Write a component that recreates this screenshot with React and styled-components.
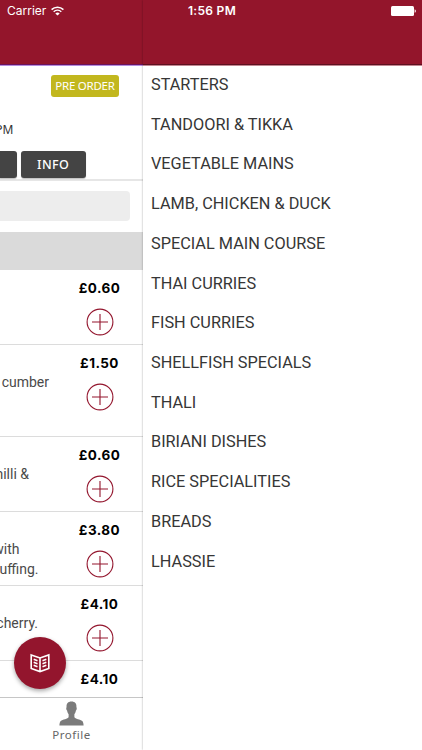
import React from 'react'
import styled, { createGlobalStyle } from 'styled-components'

const categories = [
  'STARTERS',
  'TANDOORI & TIKKA',
  'VEGETABLE MAINS',
  'LAMB, CHICKEN & DUCK',
  'SPECIAL MAIN COURSE',
  'THAI CURRIES',
  'FISH CURRIES',
  'SHELLFISH SPECIALS',
  'THALI',
  'BIRIANI DISHES',
  'RICE SPECIALITIES',
  'BREADS',
  'LHASSIE',
]

const dishes = [
  { price: '£0.60', height: 74.5, lines: [] },
  { price: '£1.50', height: 92.5, lines: ['cumber'], end: 49 },
  { price: '£0.60', height: 74.5, lines: ['hilli &'], end: 29 },
  { price: '£3.80', height: 74.5, lines: ['with', 'uffing.'], end: 38.5 },
  { price: '£4.10', height: 74.5, lines: ['cherry.'], end: 38 },
  { price: '£4.10', height: 38, lines: [] },
]

const AddIcon = () => (
  <svg width="28" height="28" viewBox="0 0 28 28" fill="none" stroke="#93152d" strokeWidth="1.1">
    <circle cx="14" cy="14" r="12.9" />
    <path d="M6 14H22M14 6V22" />
  </svg>
)

const WifiIcon = () => (
  <svg width="13" height="10" viewBox="0 0 13 10" fill="none" stroke="#fff" strokeWidth="1.5">
    <path d="M0.6 3.6C3.9 0.3 9.1 0.3 12.4 3.6" />
    <path d="M2.7 5.8C4.9 3.8 8.1 3.8 10.3 5.8" />
    <path d="M4.3 7.4C5.6 6.3 7.4 6.3 8.7 7.4L6.5 9.6Z" fill="#fff" stroke="none" />
  </svg>
)

const BatteryIcon = () => (
  <svg width="26" height="10" viewBox="0 0 26 10" fill="#fff">
    <rect width="23" height="10" rx="1.5" />
    <path d="M23.6 3.2C25.3 3.7 25.3 6.3 23.6 6.8Z" />
  </svg>
)

const MenuBookIcon = () => (
  <svg width="20" height="20" viewBox="0 0 20 20" fill="none" stroke="#fff" strokeWidth="1.6">
    <path d="M1.2 1.9L10 5L18.8 1.9V15.4L10 18.6L1.2 15.4ZM10 5V18.6" />
    <path d="M3.7 6.3L7.5 7.7M3.7 9.3L7.5 10.7M3.7 12.3L7.5 13.7M16.3 6.3L12.5 7.7M16.3 9.3L12.5 10.7M16.3 12.3L12.5 13.7" />
  </svg>
)

const ProfileIcon = () => (
  <svg width="25" height="25" viewBox="0 0 26 25" preserveAspectRatio="none" fill="#7b7b7b">
    <path d="M13 0.5C9.4 0.5 7.5 2.6 7.9 6.2C7.2 6.5 7.5 9 8.4 9.6C8.7 11.4 9.3 12.4 10 13.2V16C9.4 18 3.6 18.5 1.8 20C0.8 20.9 0.5 22.8 0.4 24.5H25.6C25.5 22.8 25.2 20.9 24.2 20C22.4 18.5 16.6 18 16 16V13.2C16.7 12.4 17.3 11.4 17.6 9.6C18.5 9 18.8 6.5 18.1 6.2C18.5 2.6 16.6 0.5 13 0.5Z" />
  </svg>
)

const App = () => {
  return (
    <Screen>
      <GlobalStyle />
      <Page>
        <PageHeader />
        <Restaurant>
          <Badge>PRE ORDER</Badge>
          <Hours>PM</Hours>
          <Actions>
            <Action $cut />
            <Action>INFO</Action>
          </Actions>
        </Restaurant>
        <SearchBar>
          <SearchField />
        </SearchBar>
        <SectionTitle />
        <DishList>
          {dishes.map((dish, i) => (
            <Dish key={i} $height={dish.height}>
              <Description $end={dish.end}>
                {dish.lines.map((line) => (
                  <Line key={line} $short={line === 'with'}>{line}</Line>
                ))}
              </Description>
              <Order>
                <Price>{dish.price}</Price>
                <AddIcon />
              </Order>
            </Dish>
          ))}
        </DishList>
        <TabBar>
          <ProfileIcon />
          <TabLabel>Profile</TabLabel>
        </TabBar>
      </Page>
      <Drawer>
        <DrawerHeader />
        <Categories>
          {categories.map((name) => (
            <Category key={name}>{name}</Category>
          ))}
        </Categories>
      </Drawer>
      <StatusBar>
        <Carrier>
          Carrier
          <WifiIcon />
        </Carrier>
        <Clock>1:56 PM</Clock>
        <BatteryIcon />
      </StatusBar>
      <MenuButton>
        <MenuBookIcon />
      </MenuButton>
    </Screen>
  )
}

export default App

const GlobalStyle = createGlobalStyle`
  * {
    box-sizing: border-box;
  }

  body {
    margin: 0;
    background: #fff;
    font-family: Roboto, sans-serif;
  }
`

const Screen = styled.div`
  position: relative;
  display: flex;
  width: 422px;
  height: 750px;
  overflow: hidden;
`

const Page = styled.div`
  display: flex;
  flex-direction: column;
  width: 143px;
  height: 750px;
  overflow: hidden;
`

const PageHeader = styled.div`
  flex: none;
  height: 66px;
  background: #93152b;
  border-bottom: 1px solid #b58bdc;
  box-shadow: inset 0 -1px 0 #6b1460;
`

const Restaurant = styled.div`
  flex: none;
  display: flex;
  flex-direction: column;
  height: 115px;
  padding-top: 9px;
  border-bottom: 2px solid #e6e6e6;
`

const Badge = styled.div`
  align-self: flex-end;
  width: 68px;
  height: 22px;
  margin-right: 24px;
  border-radius: 3px;
  background: #c2b71e;
  color: #fff;
  font: 11.5px/22px 'Noto Sans', sans-serif;
  letter-spacing: -0.25px;
  text-align: center;
  white-space: nowrap;
`

const Hours = styled.div`
  display: flex;
  justify-content: flex-end;
  width: 13.5px;
  margin-top: 24px;
  color: #333;
  font: 12px/18px 'Noto Sans', sans-serif;
`

const Actions = styled.div`
  display: flex;
  gap: 4px;
  margin-top: 12px;
`

const Action = styled.div`
  width: ${(props) => (props.$cut ? '16.7px' : '65px')};
  height: 27px;
  border-radius: ${(props) => (props.$cut ? '0 3px 3px 0' : '3px')};
  background: #444;
  box-shadow: 0 1px 1px rgba(0, 0, 0, 0.25);
  color: #fff;
  font: 500 12.5px/28px 'Noto Sans', sans-serif;
  letter-spacing: 0.4px;
  text-align: center;
`

const SearchBar = styled.div`
  flex: none;
  height: 51px;
  padding: 10px 13px 11px 0;
`

const SearchField = styled.div`
  height: 30px;
  border-radius: 0 4px 4px 0;
  background: #ededed;
`

const SectionTitle = styled.div`
  flex: none;
  height: 38px;
  background: #dadada;
`

const DishList = styled.div`
  flex: none;
  height: 427px;
  overflow: hidden;
`

const Dish = styled.div`
  display: flex;
  justify-content: space-between;
  height: ${(props) => props.$height}px;
  padding-right: 13px;
  border-bottom: 1px solid #dcdcdc;
  overflow: hidden;
`

const Description = styled.div`
  display: flex;
  flex-direction: column;
  align-items: flex-end;
  width: ${(props) => props.$end || 0}px;
  padding-top: 27px;
  color: #4a4a4a;
  font-size: 14px;
  line-height: 20.5px;
`

const Line = styled.div`
  margin-right: ${(props) => (props.$short ? '19px' : '0')};
  white-space: nowrap;
`

const Order = styled.div`
  display: flex;
  flex-direction: column;
  align-items: center;
  width: 61px;
  padding-top: 9px;
`

const Price = styled.div`
  margin-bottom: 11px;
  color: #000;
  font: 700 13.5px/18px Inter, sans-serif;
  letter-spacing: 0.45px;
`

const TabBar = styled.div`
  flex: none;
  display: flex;
  flex-direction: column;
  align-items: center;
  height: 53px;
  padding-top: 3px;
  border-top: 1px solid #c6c6c6;
`

const TabLabel = styled.div`
  color: #666;
  font: 11.5px/18px 'Noto Sans', sans-serif;
  letter-spacing: 0.5px;
`

const Drawer = styled.div`
  position: relative;
  width: 279px;
  height: 750px;
  background: #fff;
  box-shadow: 0 0 2px rgba(0, 0, 0, 0.35);
`

const DrawerHeader = styled.div`
  height: 66px;
  background: #93152b;
  border-bottom: 1px solid #c38791;
  box-shadow: inset 0 -1px 0 #5f1020;
`

const Categories = styled.div`
  display: flex;
  flex-direction: column;
  padding-left: 8px;
`

const Category = styled.div`
  height: 39.73px;
  color: #363636;
  font-size: 16.3px;
  line-height: 38px;
`

const StatusBar = styled.div`
  position: absolute;
  top: 0;
  left: 0;
  display: grid;
  grid-template-columns: 1fr auto 1fr;
  align-items: center;
  width: 422px;
  height: 22px;
  padding: 0 5px 0 7px;
  color: #fff;
  font: 12px/22px Inter, sans-serif;

  & > :last-child {
    justify-self: end;
  }
`

const Carrier = styled.div`
  display: flex;
  align-items: center;
  gap: 5px;
`

const Clock = styled.div`
  font-weight: 600;
  letter-spacing: 0.3px;
`

const MenuButton = styled.div`
  position: absolute;
  top: 637px;
  left: 14px;
  display: flex;
  align-items: center;
  justify-content: center;
  width: 52px;
  height: 52px;
  border-radius: 50%;
  background: #93152d;
  box-shadow: 0 2px 4px rgba(0, 0, 0, 0.35);
`
